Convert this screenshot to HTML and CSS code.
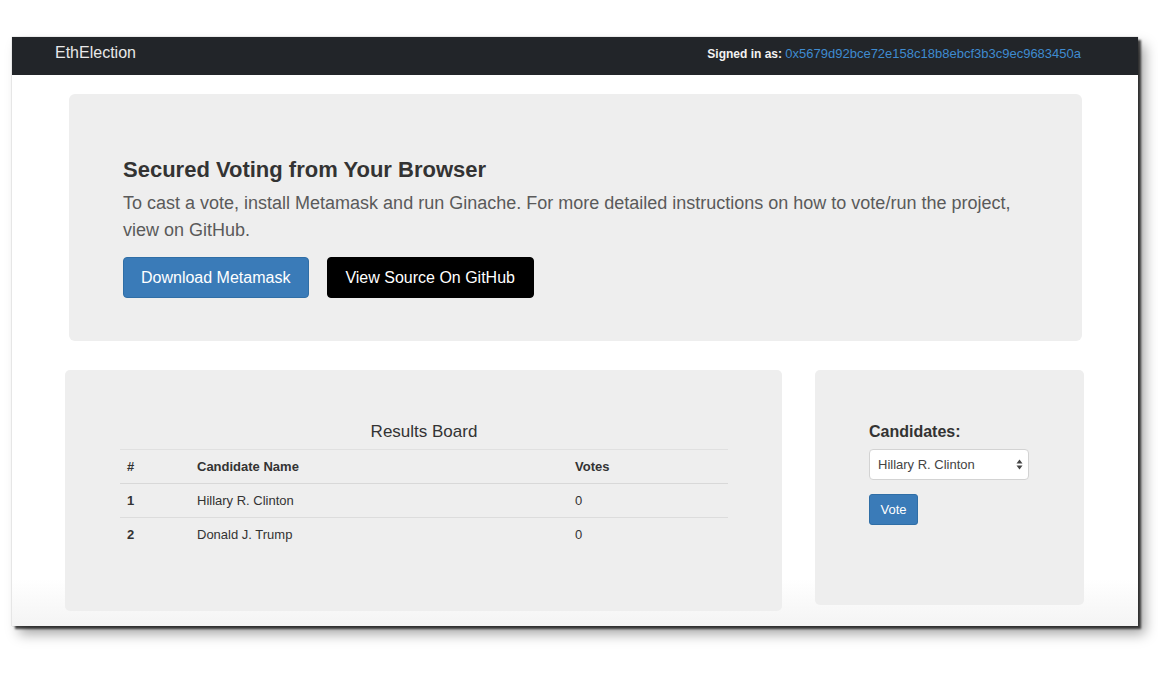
FILE: index.html
```html
<!DOCTYPE html>
<html>
<head>
<meta charset="utf-8">
<title>EthElection</title>
<link rel="stylesheet" href="styles.css">
</head>
<body>
<div class="stage">
  <div class="window">
    <nav class="navbar">
      <span class="brand">EthElection</span>
      <span class="signed"><b>Signed in as:</b> <span class="addr">0x5679d92bce72e158c18b8ebcf3b3c9ec9683450a</span></span>
    </nav>
    <main class="main">
      <section class="jumbotron">
        <h1 class="jumbo-title">Secured Voting from Your Browser</h1>
        <p class="lead">To cast a vote, install Metamask and run Ginache. For more detailed instructions on how to vote/run the project, view on GitHub.</p>
        <div class="actions">
          <a class="btn btn-primary btn-lg">Download Metamask</a>
          <a class="btn btn-dark btn-lg">View Source On GitHub</a>
        </div>
      </section>
      <div class="row">
        <section class="panel results">
          <h4 class="results-title">Results Board</h4>
          <table class="table">
            <thead>
              <tr><th class="c-num">#</th><th class="c-name">Candidate Name</th><th>Votes</th></tr>
            </thead>
            <tbody>
              <tr><th class="c-num">1</th><td>Hillary R. Clinton</td><td>0</td></tr>
              <tr><th class="c-num">2</th><td>Donald J. Trump</td><td>0</td></tr>
            </tbody>
          </table>
        </section>
        <section class="panel vote-panel">
          <div class="label">Candidates:</div>
          <div class="select">
            <span>Hillary R. Clinton</span>
            <svg width="7" height="11" viewBox="0 0 7 11"><path d="M3.5 0.5 L6.5 4.5 L0.5 4.5 Z M3.5 10.5 L6.5 6.5 L0.5 6.5 Z" fill="#444"/></svg>
          </div>
          <a class="btn btn-primary btn-sm">Vote</a>
        </section>
      </div>
    </main>
  </div>
</div>
</body>
</html>
```
FILE: styles.css
```css
* { box-sizing: border-box; }
html, body { margin: 0; padding: 0; background: #fff; }
body { font-family: "Liberation Sans", Arial, Helvetica, sans-serif; color: #333; }

.stage { padding: 37px 0 0 12px; height: 674px; }

.window {
  width: 1126px;
  height: 589px;
  overflow: hidden;
  background: linear-gradient(to bottom, #fff 0%, #fff 92%, #f4f4f4 100%);
  box-shadow: 0 0 1px rgba(0,0,0,0.35), 3px 3px 2px rgba(0,0,0,0.7), 7px 8px 12px rgba(0,0,0,0.35);
}

.navbar {
  height: 38px;
  background: #222529;
  display: flex;
  align-items: center;
  justify-content: space-between;
  padding: 0 57px 7px 43px;
}
.brand { color: #e8e8e8; font-size: 16px; line-height: 20px; }
.signed { color: #f2f2f2; font-size: 12px; line-height: 16px; padding-top: 3px; }
.signed b { font-weight: bold; }
.addr { color: #3f8bd0; font-size: 13px; }

.main { padding: 19px 0 0 0; }

.jumbotron {
  margin: 0 56px 0 57px;
  background: #eee;
  border-radius: 6px;
  padding: 63px 54px 43px 54px;
  height: 247px;
}
.jumbo-title {
  margin: 0;
  font-size: 22px;
  line-height: 26px;
  font-weight: bold;
  color: #333;
}
.lead {
  margin: 7px 0 0 0;
  font-size: 18px;
  line-height: 27px;
  color: #5a5a5a;
  max-width: 905px;
}
.actions { display: flex; gap: 18px; margin-top: 13px; }

.btn {
  display: inline-flex;
  align-items: center;
  justify-content: center;
  color: #fff;
  text-decoration: none;
  border-radius: 4px;
  border: 1px solid transparent;
}
.btn-lg { height: 41px; padding: 0 18px 0 17px; font-size: 16px; }
.btn-sm { height: 31px; width: 49px; font-size: 13px; border-radius: 3px; }
.btn-primary { background: #3a7bb8; border-color: #2f6ea6; }
.btn-dark { background: #000; border-color: #000; }

.row { display: flex; align-items: flex-start; margin-top: 29px; padding-left: 53px; gap: 33px; }

.panel { background: #eee; border-radius: 5px; }

.results { width: 717px; padding: 52px 54px 60px 55px; }
.results-title {
  margin: 0 0 7px 0;
  text-align: center;
  font-size: 17px;
  line-height: 20px;
  font-weight: normal;
  color: #333;
}
.table { width: 100%; border-collapse: collapse; font-size: 13px; }
.table th, .table td {
  text-align: left;
  padding: 8px 7px;
  line-height: 17px;
  border-top: 1px solid #dcdcdc;
  color: #333;
}
.table thead th { border-bottom: 1px solid #d8d8d8; border-top: 1px solid #e0e0e0; }
.table th { font-weight: bold; }
.table td { font-weight: normal; }
.c-num { width: 70px; }
.c-name { width: 378px; }

.vote-panel { width: 269px; padding: 52px 54px 80px 54px; }
.label { font-size: 16px; line-height: 20px; font-weight: bold; color: #333; margin-bottom: 7px; }
.select {
  width: 160px;
  height: 31px;
  background: #fff;
  border: 1px solid #d3d3d3;
  border-radius: 4px;
  display: flex;
  align-items: center;
  justify-content: space-between;
  padding: 0 5px 0 8px;
  font-size: 13px;
  color: #444;
  margin-bottom: 14px;
}
```
